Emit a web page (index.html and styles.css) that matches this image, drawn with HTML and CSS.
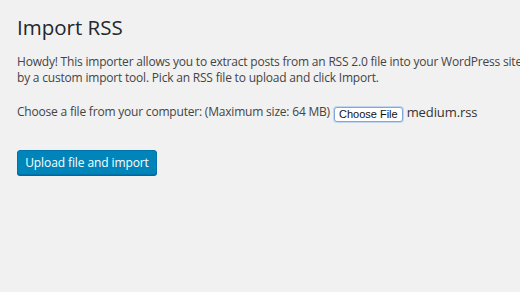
FILE: index.html
```html
<!DOCTYPE html>
<html>
<head>
<meta charset="utf-8">
<link rel="stylesheet" href="styles.css">
</head>
<body>
<div class="wrap">
  <h1 class="title">Import RSS</h1>
  <p class="intro">Howdy! This importer allows you to extract posts from an RSS 2.0 file into your WordPress site. This is useful if you want to import your posts from a system that is not handled<br>by a custom import tool. Pick an RSS file to upload and click Import.</p>
  <p class="choose">Choose a file from your computer: (Maximum size: 64 MB) <span class="file-btn">Choose File</span> <span class="file-name">medium.rss</span></p>
  <div class="submit"><span class="button-primary">Upload file and import</span></div>
</div>
</body>
</html>
```
FILE: styles.css
```css
html, body {
  margin: 0;
  padding: 0;
  background: #f1f1f1;
  overflow: hidden;
  width: 520px;
  height: 292px;
}
.wrap {
  padding: 13px 0 0 17px;
  font-family: "Open Sans", sans-serif;
  color: #444;
  white-space: nowrap;
}
.title {
  margin: 0;
  font-size: 20.5px;
  font-weight: 400;
  line-height: 29px;
  color: #23282d;
}
.intro {
  margin: 12px 0 0;
  font-size: 12px;
  letter-spacing: -0.2px;
  line-height: 16px;
}
.choose {
  margin: 18px 0 0;
  font-size: 12px;
  letter-spacing: -0.2px;
  line-height: 16px;
  display: flex;
  align-items: center;
}
.file-btn {
  display: inline-block;
  font-family: "Liberation Sans", Arial, sans-serif;
  font-size: 11px;
  letter-spacing: 0;
  color: #111;
  background: #fff;
  border: 1px solid #7fa8d8;
  box-shadow: 0 0 0 1px #c3d7f0;
  border-radius: 3px;
  padding: 0 4px;
  line-height: 13px;
  margin-left: 4px;
  margin-right: 4px;
  position: relative;
  top: 2px;
}
.file-name {
  font-size: 13px;
  letter-spacing: -0.1px;
  color: #333;
}
.submit {
  margin-top: 30px;
}
.button-primary {
  display: inline-block;
  box-sizing: border-box;
  width: 140px;
  height: 25px;
  line-height: 23px;
  text-align: center;
  background: #0085ba;
  border: 1px solid #0073aa;
  border-radius: 3px;
  box-shadow: 0 1px 0 #006799;
  color: #fff;
  font-size: 12px;
  letter-spacing: -0.1px;
}
```
